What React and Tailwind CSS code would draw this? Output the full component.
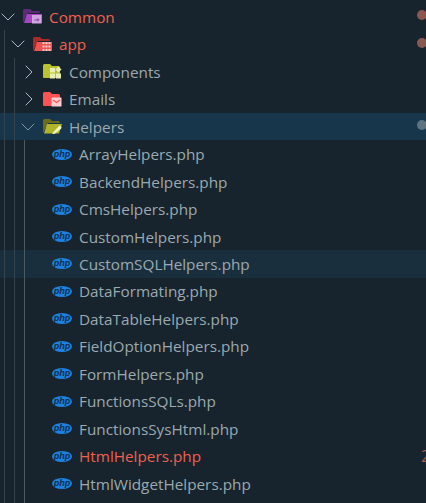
import { ChevronDown, ChevronRight } from 'lucide-react';

const files = [
    { name: 'ArrayHelpers.php' },
    { name: 'BackendHelpers.php' },
    { name: 'CmsHelpers.php' },
    { name: 'CustomHelpers.php' },
    { name: 'CustomSQLHelpers.php', hover: true },
    { name: 'DataFormating.php' },
    { name: 'DataTableHelpers.php' },
    { name: 'FieldOptionHelpers.php' },
    { name: 'FormHelpers.php' },
    { name: 'FunctionsSQLs.php' },
    { name: 'FunctionsSysHtml.php' },
    { name: 'HtmlHelpers.php', error: true },
    { name: 'HtmlWidgetHelpers.php' },
];

const PhpIcon = () => (
    <svg width="20" height="11" viewBox="0 0 20 11" className="shrink-0">
        <ellipse cx="10" cy="5.5" rx="10" ry="5.5" fill="#1e80e0" />
        <text x="10" y="8" textAnchor="middle" fontSize="9" fontStyle="italic" fontWeight="700" fontFamily="Liberation Sans, sans-serif" fill="#0e2f4f">php</text>
    </svg>
);

const PurpleFolder = () => (
    <svg width="19" height="15" viewBox="0 0 19 15" className="shrink-0">
        <path d="M0 1.5A1.5 1.5 0 0 1 1.5 0H7l2 2h6.5A1.5 1.5 0 0 1 17 3.5V4H5L0 14Z" fill="#5e2a78" />
        <path d="M1 14 4 5h15v9Z" fill="#a845c4" />
        <rect x="9" y="6" width="9.5" height="8.5" fill="#cfa6dc" />
        <path d="M11.5 10.5h3V9l2 1.8-2 1.8v-1.2h-3Z" fill="#8d3aa8" />
    </svg>
);

const RedFolder = () => (
    <svg width="19" height="15" viewBox="0 0 19 15" className="shrink-0">
        <path d="M0 1.5A1.5 1.5 0 0 1 1.5 0H7l2 2h6.5A1.5 1.5 0 0 1 17 3.5V4H5L0 14Z" fill="#a82a2a" />
        <path d="M1 14 4 5h15v9Z" fill="#ef5350" />
        <g fill="#ffcdd2">
            <rect x="9.5" y="5" width="2" height="2" />
            <rect x="12.5" y="5" width="2" height="2" />
            <rect x="15.5" y="5" width="2" height="2" />
            <rect x="9.5" y="8.5" width="2" height="2" />
            <rect x="12.5" y="8.5" width="2" height="2" />
            <rect x="15.5" y="8.5" width="2" height="2" />
            <rect x="9.5" y="12" width="2" height="2" />
            <rect x="12.5" y="12" width="2" height="2" />
            <rect x="15.5" y="12" width="2" height="2" />
        </g>
    </svg>
);

const ComponentsFolder = () => (
    <svg width="19" height="15" viewBox="0 0 19 15" className="shrink-0">
        <path d="M0 1.5A1.5 1.5 0 0 1 1.5 0H7l2 2h6.5A1.5 1.5 0 0 1 17 3.5V13a1 1 0 0 1-1 1H1a1 1 0 0 1-1-1Z" fill="#b9c22f" />
        <g fill="#e8eeb4">
            <rect x="7" y="4" width="5" height="4.5" />
            <path d="M15.5 2.5 18.5 5.5 15.5 8.5 12.5 5.5Z" />
            <rect x="7" y="9.5" width="5" height="5" />
            <rect x="13" y="9.5" width="5" height="5" />
        </g>
    </svg>
);

const EmailsFolder = () => (
    <svg width="19" height="15" viewBox="0 0 19 15" className="shrink-0">
        <path d="M0 1.5A1.5 1.5 0 0 1 1.5 0H7l2 2h6.5A1.5 1.5 0 0 1 17 3.5V13a1 1 0 0 1-1 1H1a1 1 0 0 1-1-1Z" fill="#ff5252" />
        <rect x="8.5" y="5.5" width="10" height="9" rx="0.5" fill="#ffcdd2" />
        <path d="M10 8l3.5 2.5L17 8" fill="none" stroke="#ff5252" strokeWidth="1.2" />
    </svg>
);

const HelpersFolder = () => (
    <svg width="19" height="15" viewBox="0 0 19 15" className="shrink-0">
        <path d="M0 1.5A1.5 1.5 0 0 1 1.5 0H7l2 2h6.5A1.5 1.5 0 0 1 17 3.5V4H5L0 14Z" fill="#6b6d1c" />
        <path d="M1 14.5 4 5h15l-3 9.5Z" fill="#afb42b" />
        <path d="M9 14.5 15.5 7.5a1.5 1.5 0 0 1 2.5 2.2L11.5 15Z" fill="#f0f4c3" />
    </svg>
);

const Row = ({ indent, hover, active, children }) => (
    <div className={`flex h-[27.47px] items-center ${indent} ${active ? 'bg-[#17354b]' : ''} ${hover ? 'bg-[#1a2f3e]' : ''}`}>
        {children}
    </div>
);

const Chevron = ({ open, dim }) => {
    const Icon = open ? ChevronDown : ChevronRight;
    return (
        <span className="flex w-[12px] shrink-0 justify-center">
            <Icon size={24} strokeWidth={1} className={`shrink-0 ${dim ? 'text-[#7f97a5]' : 'text-[#a6bcc8]'}`} />
        </span>
    );
};

const Label = ({ className, children }) => (
    <span className={`ml-[7px] pt-px text-[15.3px] whitespace-nowrap ${className}`}>{children}</span>
);

const Dot = ({ className }) => (
    <span className={`absolute left-[417px] h-[10px] w-[10px] rounded-full ${className}`} />
);

export default function App() {
    return (
        <div className="relative h-[503px] w-[426px] overflow-hidden bg-[#17242d] pt-[3px] font-['Open_Sans',sans-serif]">
            <Row indent="pl-[2px]">
                <Chevron open />
                <span className="ml-[9px]"><PurpleFolder /></span>
                <Label className="text-[#f0604e]">Common</Label>
            </Row>
            <Row indent="pl-[12px]">
                <Chevron open />
                <span className="ml-[9px]"><RedFolder /></span>
                <Label className="text-[#f0604e]">app</Label>
            </Row>
            <Row indent="pl-[23px]">
                <Chevron />
                <span className="ml-[8px]"><ComponentsFolder /></span>
                <Label className="text-[#9ca9b0]">Components</Label>
            </Row>
            <Row indent="pl-[23px]">
                <Chevron />
                <span className="ml-[8px]"><EmailsFolder /></span>
                <Label className="text-[#9ca9b0]">Emails</Label>
            </Row>
            <Row indent="pl-[22px]" active>
                <Chevron open dim />
                <span className="ml-[9px]"><HelpersFolder /></span>
                <Label className="text-[#9ca9b0]">Helpers</Label>
            </Row>
            {files.map(file => (
                <Row key={file.name} indent="pl-[52px]" hover={file.hover}>
                    <PhpIcon />
                    <Label className={file.error ? 'text-[#f0604e]' : 'text-[#9ca9b0]'}>{file.name}</Label>
                </Row>
            ))}

            {/* indent guides */}
            <span className="absolute left-[4px] top-[30px] h-[473px] w-px bg-[#33424b]" />
            <span className="absolute left-[14px] top-[58px] h-[445px] w-px bg-[#33424b]" />
            <span className="absolute left-[24px] top-[140px] h-[363px] w-px bg-[#4c5a62]" />

            {/* git badges */}
            <Dot className="top-[10px] bg-[#8a5850]" />
            <Dot className="top-[38px] bg-[#8a5850]" />
            <Dot className="top-[120px] bg-[#5f7480]" />
            <span className="absolute left-[421px] top-[445px] text-[15.4px] text-[#a85a50]">2</span>
        </div>
    );
}
